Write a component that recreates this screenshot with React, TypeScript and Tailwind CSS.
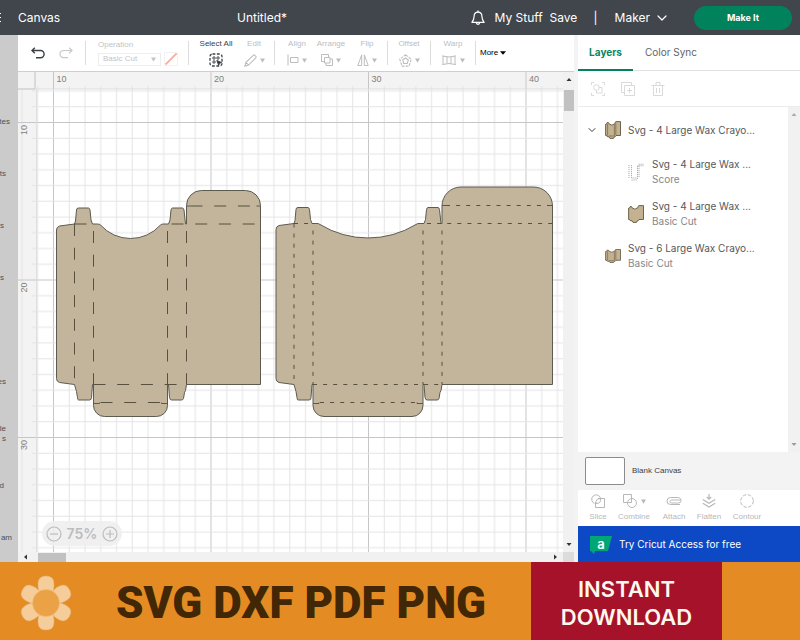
import { useState, type ReactNode } from 'react';
import { ChevronDown } from 'lucide-react';

const GRID_STEP = 15.75;

const sidebarItems = [
  { lines: ['tes'], width: 'w-2.5' },
  { lines: ['ts'], width: 'w-1.5' },
  { lines: ['s'], width: 'w-1' },
  { lines: ['s'], width: 'w-1' },
  { lines: [], width: 'w-1' },
  { lines: ['es'], width: 'w-1.5' },
  { lines: ['le', 's'], width: 'w-1.5' },
  { lines: ['d'], width: 'w-1' },
  { lines: ['am'], width: 'w-3' },
];

function Divider() {
  return <div className="h-6 w-px shrink-0 bg-[#dcdcdc]" />;
}

function Caret() {
  return (
    <svg className="h-[5px] w-[5px] shrink-0" viewBox="0 0 5 5" fill="currentColor">
      <path d="M0 .5h5L2.500 4.800z" />
    </svg>
  );
}

type ToolProps = {
  label: string;
  width: string;
  caret?: boolean;
  active?: boolean;
  children: ReactNode;
};

function Tool({ label, width, caret = true, active = false, children }: ToolProps) {
  return (
    <button
      type="button"
      className={`flex shrink-0 flex-col items-center gap-1 whitespace-nowrap text-[8px] leading-[10px] ${width} ${
        active ? 'text-[#3c3f45]' : 'text-[#bdbdbd]'
      }`}
    >
      <span>{label}</span>
      <span className="flex h-3.5 items-center gap-[3px]">
        {children}
        {caret && <Caret />}
      </span>
    </button>
  );
}

function Header() {
  return (
    <header className="flex h-[35px] items-center bg-[#41454c] font-[Inter,sans-serif] text-[12px] text-white">
      <div className="flex w-[18px] shrink-0 flex-col gap-[3px]">
        <div className="h-px w-px bg-white" />
        <div className="h-px w-px bg-white" />
        <div className="h-px w-px bg-white" />
      </div>
      <span className="w-[219px]">Canvas</span>
      <span>Untitled*</span>
      <div className="ml-auto flex items-center">
        <button type="button" aria-label="Notifications" className="mr-2.5">
          <svg className="h-4 w-3.5" viewBox="0 0 14 16" fill="none" stroke="currentColor" strokeWidth="1.2">
            <path d="M7 2.2C4.6 2.2 3.1 4 3.1 6.3c0 3-.7 4.2-2.2 6.1h12.2c-1.5-1.9-2.2-3.1-2.2-6.1C10.9 4 9.4 2.2 7 2.2z" strokeLinejoin="round" />
            <path d="M7 2.2V.8M5.3 12.6a1.7 1.7 0 0 0 3.4 0" strokeLinecap="round" />
          </svg>
        </button>
        <a href="#stuff" className="w-[55px]">My Stuff</a>
        <button type="button" className="w-11 text-left">Save</button>
        <span className="w-[21px]">|</span>
        <button type="button" className="mr-6 flex items-center gap-1">
          Maker
          <ChevronDown className="h-4 w-4" strokeWidth={1.8} />
        </button>
        <button type="button" className="mr-2 h-6 w-[98px] rounded-full bg-[#00835d] text-[9px] font-bold">
          Make It
        </button>
      </div>
    </header>
  );
}

function Toolbar() {
  return (
    <div className="flex h-[37px] shrink-0 items-center overflow-hidden border-b border-[#cfcfcf] bg-white">
      <button type="button" aria-label="Undo" className="ml-1.5 flex w-7 justify-center text-[#3c3f45]">
        <svg className="h-3.5 w-3.5" viewBox="0 0 14 14" fill="none" stroke="currentColor" strokeWidth="1.4">
          <path d="M3.8 1.8L1 4.5l2.800 2.700M1 4.500h8.500a3.600 3.600 0 0 1 0 7.200H5" />
        </svg>
      </button>
      <button type="button" aria-label="Redo" className="flex w-7 justify-center text-[#c8c8c8]">
        <svg className="h-3.5 w-3.5" viewBox="0 0 14 14" fill="none" stroke="currentColor" strokeWidth="1.2">
          <path d="M10.200 1.800L13 4.500l-2.800 2.700M13 4.500H4.500a3.600 3.600 0 0 0 0 7.200H9" />
        </svg>
      </button>
      <div className="w-[5px]" />
      <Divider />
      <div className="ml-3 mr-2.5 flex w-20 flex-col gap-0.5 text-[8px] leading-[10px] text-[#c4c4c4]">
        <label htmlFor="operation">Operation</label>
        <div className="flex items-center justify-between">
          <div className="flex h-[13px] w-[63px] items-center border border-[#eeeeee] pr-1">
            <select id="operation" className="h-full w-full appearance-none bg-transparent pl-1 leading-[10px] outline-none">
              <option>Basic Cut</option>
            </select>
            <Caret />
          </div>
          <button type="button" aria-label="Material colour" className="border border-[#f2f2f2]">
            <svg className="h-3 w-3" viewBox="0 0 12 12" stroke="#f5ad9d" strokeWidth="1.800">
              <path d="M.5 11.500L11.500 .5" />
            </svg>
          </button>
        </div>
      </div>
      <Divider />
      <div className="w-[9px]" />
      <Tool label="Select All" width="w-9" caret={false} active>
        <svg className="h-3.5 w-3.5" viewBox="0 0 14 14" fill="none" stroke="currentColor">
          <rect x="1" y="1" width="12" height="12" rx="2.500" strokeWidth="1.300" strokeDasharray="2.800 1.600" />
          <circle cx="5" cy="5" r="1.200" />
          <circle cx="9" cy="5" r="1.200" />
          <circle cx="5" cy="9" r="1.200" />
          <path d="M7.800 7.500l4.700 2-2 .8-.8 2z" fill="currentColor" />
        </svg>
      </Tool>
      <Tool label="Edit" width="w-10">
        <svg className="h-[13px] w-[13px]" viewBox="0 0 12 12" fill="none" stroke="currentColor">
          <path d="M.8 11.200l1-3.500L8.500 1.200q.8-.8 1.500 0l.8.8q.8.7 0 1.500L4.300 10.200zM1.800 7.700l2.500 2.500" />
        </svg>
      </Tool>
      <Divider />
      <div className="w-1" />
      <Tool label="Align" width="w-9">
        <svg className="h-3 w-3" viewBox="0 0 12 12" fill="none" stroke="currentColor">
          <path d="M1 .5v11M3.500 3.500h7.500v5H3.500z" />
        </svg>
      </Tool>
      <Tool label="Arrange" width="w-8">
        <svg className="h-3 w-3" viewBox="0 0 12 12" fill="none" stroke="currentColor">
          <path d="M3.500 7.500h-3v-7h7v3M5 9v2.500h6.500V5H9M3.500 3.500h5.500v5.500H3.500z" />
        </svg>
      </Tool>
      <Tool label="Flip" width="w-10">
        <svg className="h-3 w-3" viewBox="0 0 12 12" fill="none" stroke="currentColor">
          <path d="M4.700 .8v10.700H.8zM7.300 .8v10.700h3.900z" />
        </svg>
      </Tool>
      <Divider />
      <Tool label="Offset" width="w-[42px]">
        <svg className="h-[13px] w-[13px]" viewBox="0 0 12 12" fill="none" stroke="currentColor">
          <path d="M6 .8l5.300 4-2 6.400H2.700l-2-6.400z" strokeDasharray="2.500 1" />
          <path d="M6 3.700l2.600 1.900-1 3.100H4.400l-1-3.100z" />
        </svg>
      </Tool>
      <Divider />
      <Tool label="Warp" width="w-11">
        <svg className="h-3 w-4" viewBox="0 0 16 12" fill="none" stroke="currentColor">
          <path d="M1.500 2q6.500 2 13 0M1.500 10.500q6.500-2 13 0M2 1.500v9.500M14 1.500v9.500M6 3v6.500M10 3v6.500" />
        </svg>
      </Tool>
      <Divider />
      <button type="button" className="ml-1 flex items-center gap-0.5 text-[8px] text-black">
        More
        <svg className="h-1 w-1.5" viewBox="0 0 6 4" fill="currentColor">
          <path d="M0 .3h6L3 3.800z" />
        </svg>
      </button>
    </div>
  );
}

// A carton template: fold lines at x1..x4, outer edges at x0 and x5
type BoxProps = {
  x: [number, number, number, number, number, number];
  top: number;
  lid: number;
  radius: number;
  dash: string;
};

function BoxTemplate({ x, top, lid, radius: r, dash }: BoxProps) {
  const [x0, x1, x2, x3, x4, x5] = x;
  const bottom = 312.5;
  // Thumb notch is a circular arc of a fixed depth
  const chord = x3 - x2 - 14;
  const depth = 13.5;
  const notch = (chord * chord) / (8 * depth) + depth / 2;
  const outline = [
    `M${x0} ${top + 6}Q${x0} ${top + 3} ${x0 + 3} ${top + 2}L${x1} ${top}`,
    `L${x1 + 1} ${top - 3}L${x1 + 2} ${top - 14}Q${x1 + 2} ${top - 16} ${x1 + 4} ${top - 16}`,
    `H${x1 + 14}Q${x1 + 15} ${top - 16} ${x1 + 15.5} ${top - 14}L${x1 + 16.5} ${top - 4}L${x2 - 1} ${top}`,
    `H${x2 + 4}Q${x2 + 6} ${top} ${x2 + 7} ${top + 1}A${notch} ${notch} 0 0 0 ${x3 - 7} ${top + 1}Q${x3 - 6} ${top} ${x3 - 4} ${top}`,
    `H${x3 + 1}L${x3 + 2.5} ${top - 4}L${x3 + 3.5} ${top - 14}Q${x3 + 4} ${top - 16} ${x3 + 5} ${top - 16}`,
    `H${x4 - 4}Q${x4 - 3} ${top - 16} ${x4 - 2.5} ${top - 14}L${x4 - 1} ${top}H${x4}`,
    `V${lid + r}A${r} ${r} 0 0 1 ${x4 + r} ${lid}H${x5 - r}A${r} ${r} 0 0 1 ${x5} ${lid + r}V${bottom}H${x4}`,
    `L${x4 - 1} ${bottom + 6}L${x4 - 2} ${bottom + 8}L${x4 - 3} ${bottom + 14}Q${x4 - 3.5} ${bottom + 15.5} ${x4 - 5} ${bottom + 15.5}`,
    `H${x3 + 4}Q${x3 + 2.5} ${bottom + 15.5} ${x3 + 2} ${bottom + 13}L${x3 + 1} ${bottom}H${x3}`,
    `V${bottom + 21}A11 11 0 0 1 ${x3 - 11} ${bottom + 32}H${x2 + 11}A11 11 0 0 1 ${x2} ${bottom + 21}V${bottom}H${x2 - 1}`,
    `L${x2 - 2} ${bottom + 13}Q${x2 - 2} ${bottom + 15.5} ${x2 - 4} ${bottom + 15.5}H${x1 + 4}`,
    `Q${x1 + 3} ${bottom + 15.5} ${x1 + 3} ${bottom + 13}L${x1 + 2} ${bottom + 7}L${x1} ${bottom}L${x0 + 3} ${bottom - 2}Q${x0} ${bottom - 3} ${x0} ${bottom - 6}Z`,
  ].join('');

  return (
    <g fill="none" stroke="#5d5a50">
      <path d={outline} fill="#c3b59b" />
      <g strokeDasharray={dash} stroke="#57503f">
        <path d={`M${x1} ${top}V${bottom}`} />
        {[x2, x3, x4].map((fold) => (
          <path key={fold} d={`M${fold} ${top + 7}V${bottom}`} />
        ))}
        <path d={`M${x1} ${top}H${x2}M${x3 + 4} ${top}H${x5}`} />
        <path d={`M${x4 + 4} ${top - 18}H${x5}`} />
        <path d={`M${x2} ${bottom}H${x4}`} />
        <path d={`M${x2 + 7} ${bottom + 18}H${x3 - 7}`} />
      </g>
      <path d={`M${x4} ${top - 18}h4M${x5} ${top - 18}h-4M${x2} ${bottom + 19}h6v-1M${x3} ${bottom + 19}h-6v-1`} />
    </g>
  );
}

function Workspace() {
  const minor = Array.from({ length: 10 }, (_, i) => i);
  const size = GRID_STEP * 10;
  return (
    <svg className="absolute inset-0 h-full w-full" fontSize="9" fill="#808080">
      <defs>
        <pattern id="columns" x="35" y="0" width={size} height="4000" patternUnits="userSpaceOnUse">
          {minor.map((i) => (
            <rect key={i} x={i * GRID_STEP} y={i === 0 ? 0 : 14} width="1" height="4000" fill={i === 0 ? '#c6c6c6' : '#e4e4e4'} />
          ))}
        </pattern>
        <pattern id="rows" x="0" y="50" width="4000" height={size} patternUnits="userSpaceOnUse">
          {minor.map((i) => (
            <rect key={i} x={i === 0 ? 0 : 14} y={i * GRID_STEP} width="4000" height="1" fill={i === 0 ? '#c6c6c6' : '#e4e4e4'} />
          ))}
        </pattern>
      </defs>
      <rect width="100%" height="100%" fill="#ffffff" />
      <rect width="100%" height="17" fill="#f3f3f3" />
      <rect width="18" height="100%" fill="#f3f3f3" />
      <rect width="100%" height="100%" fill="url(#columns)" />
      <rect y="18" width="100%" height="100%" fill="url(#rows)" />
      {[10, 20, 30, 40].map((mark, i) => (
        <text key={mark} x={38.5 + i * size} y="10">{mark}</text>
      ))}
      {[10, 20, 30].map((mark, i) => (
        <text key={mark} transform={`translate(9 ${63 + i * size}) rotate(-90)`}>{mark}</text>
      ))}
      <path d="M0 17H17V0" fill="#f3f3f3" stroke="#c0c0c0" />
      <path d="M18.500 17V4000" stroke="#e0e0e0" />
      <line x1="18" x2="100%" y1="17" y2="17" stroke="#dddddd" />
      <BoxTemplate x={[38.5, 56.5, 75.5, 149.5, 168.5, 242.5]} top={152} lid={118.5} radius={15} dash="12 11.7" />
      <BoxTemplate x={[258, 276, 295, 405, 424, 534.5]} top={151.5} lid={115} radius={19} dash="4 6.1" />
    </svg>
  );
}

function CanvasArea() {
  const [zoom, setZoom] = useState(75);
  return (
    <main className="flex min-w-0 flex-1 flex-col">
      <Toolbar />
      <div className="flex flex-1">
        <div className="relative flex-1 overflow-hidden">
          <Workspace />
          <div className="absolute bottom-1.5 left-6 flex h-[25px] w-20 items-center justify-between rounded-full bg-[#eeeeee]/90 px-1 text-[#bcbcbf]">
            <button type="button" aria-label="Zoom out" onClick={() => setZoom(zoom - 25)}>
              <svg className="h-4 w-4" viewBox="0 0 16 16" fill="none" stroke="currentColor" strokeWidth="1.2">
                <circle cx="8" cy="8" r="7" />
                <path d="M4 8h8" />
              </svg>
            </button>
            <span className="font-[Inter,sans-serif] text-[14px] font-semibold">{zoom}%</span>
            <button type="button" aria-label="Zoom in" onClick={() => setZoom(zoom + 25)}>
              <svg className="h-4 w-4" viewBox="0 0 16 16" fill="none" stroke="currentColor" strokeWidth="1.2">
                <circle cx="8" cy="8" r="7" />
                <path d="M4 8h8M8 4v8" />
              </svg>
            </button>
          </div>
        </div>
        {/* Vertical scrollbar */}
        <div className="flex w-[11px] flex-col items-center justify-between bg-[#f1f1f1] py-1">
          <div className="flex w-full flex-col items-center gap-2">
            <svg className="h-1.5 w-1.5" viewBox="0 0 6 6"><path d="M.5 5L3 2l2.500 3z" fill="#333" /></svg>
            <div className="h-[21px] w-[10px] bg-[#c1c1c1]" />
          </div>
          <svg className="h-1.5 w-1.5" viewBox="0 0 6 6"><path d="M.5 1L3 4l2.500-3z" fill="#333" /></svg>
        </div>
      </div>
      {/* Horizontal scrollbar */}
      <div className="flex h-2.5 bg-[#f1f1f1]">
        <div className="flex flex-1 items-center justify-between px-1">
          <div className="flex items-center gap-2.5">
            <svg className="h-1.5 w-1.5" viewBox="0 0 6 6"><path d="M5 .5L2 3l3 2.500z" fill="#333" /></svg>
            <div className="h-[9px] w-7 bg-[#c1c1c1]" />
          </div>
          <svg className="h-1.5 w-1.5" viewBox="0 0 6 6"><path d="M1 .5L4 3 1 5.500z" fill="#333" /></svg>
        </div>
        <div className="w-[11px] bg-[#dcdcdc]" />
      </div>
    </main>
  );
}

function Thumbnail({ kind }: { kind: 'tall' | 'cut' | 'score' | 'wide' }) {
  if (kind === 'score') {
    return (
      <svg className="h-[18px] w-4 shrink-0" viewBox="0 0 16 18" fill="none" stroke="#9a9a9a" strokeWidth="0.8" strokeDasharray="1.2 0.8">
        <path d="M1 2v13M3.500 2v13h5.500M3.500 17h5.500M9.500 16V2M11 14V2M10.500 1.200h5M10.500 2.700h5" />
      </svg>
    );
  }
  const height = kind === 'wide' ? 'h-3.5' : 'h-[18px]';
  return (
    <svg className={`w-4 shrink-0 ${height}`} viewBox="0 0 16 18" preserveAspectRatio="none" stroke="#4f4630" strokeWidth="0.8">
      <path d="M.6 3.200L1.800 2.800 2.200 1.500h1.200L4 2.800Q7 5.500 9.500 2.800L10 2.500V1.500L11 .6h4.500V14.500H11l-.8 1.200H9.500l-1 1.700H5L4 15.800H2.500L2 14.800.6 14.400z" fill="#c3b190" />
      {kind !== 'cut' && (
        <path d="M2.600 3v11.500M9.400 3.500V15M10.800 2.500v11.500M4 15h5" fill="none" strokeWidth="0.7" strokeOpacity="0.75" />
      )}
    </svg>
  );
}

function LayerText({ name, operation }: { name: string; operation?: string }) {
  return (
    <div className="whitespace-nowrap font-[Inter,sans-serif] text-[10px] leading-[15px] text-[#55585d]">
      <p>{name}</p>
      {operation && <p className="text-[#85878b]">{operation}</p>}
    </div>
  );
}

function PanelAction({ label, width, children }: { label: string; width: string; children: ReactNode }) {
  return (
    <button type="button" className={`flex flex-col items-center gap-1 text-[8px] leading-[10px] text-[#b8b8b8] ${width}`}>
      <span className="flex items-center gap-1">{children}</span>
      {label}
    </button>
  );
}

function LayersPanel() {
  return (
    <aside className="flex w-[222px] shrink-0 flex-col bg-white">
      <div className="flex h-9 border-b border-[#e2e2e2] font-[Inter,sans-serif] text-[10px] text-[#626469]">
        <button type="button" className="h-9 w-[55px] border-b-2 border-[#00835d] font-bold text-[#0a8560]">
          Layers
        </button>
        <button type="button" className="ml-3 h-[35px]">Color Sync</button>
      </div>
      <div className="flex h-9 items-center gap-4 border-b border-[#ececec] px-[13px] text-[#dadada]">
        <button type="button" aria-label="Group">
          <svg className="h-3.5 w-3.5" viewBox="0 0 14 14" fill="none" stroke="currentColor">
            <path d="M.5 3V.5H3M11 .5h2.500V3M13.500 11v2.500H11M3 13.500H.5V11M7.500 5.500h3.500V11H5.500V8.500" />
            <circle cx="5.5" cy="5.5" r="2.8" />
          </svg>
        </button>
        <button type="button" aria-label="Duplicate">
          <svg className="h-3.5 w-3.5" viewBox="0 0 14 14" fill="none" stroke="currentColor">
            <path d="M3 10.500H.5V.5h10V3M3.500 3.500h10v10h-10zM8.500 6v5M6 8.500h5" />
          </svg>
        </button>
        <button type="button" aria-label="Delete">
          <svg className="h-3.5 w-3.5" viewBox="0 0 14 14" fill="none" stroke="currentColor">
            <path d="M.5 3.500h13M2.500 3.500v10h9v-10M5 3.500v-3h4v3M5.500 6v5M8.500 6v5" />
          </svg>
        </button>
      </div>

      {/* Layer list */}
      <div className="flex flex-1">
        <ul className="flex flex-1 flex-col pt-[9px]">
          <li className="flex h-7 items-center pl-2">
            <button type="button" aria-label="Collapse group" className="mr-[7px] text-[#3c3f45]">
              <ChevronDown className="h-3 w-3" />
            </button>
            <div className="mr-[7px]"><Thumbnail kind="tall" /></div>
            <LayerText name="Svg - 4 Large Wax Crayo..." />
          </li>
          <li className="flex h-14 items-center gap-2 pl-[50px]">
            <Thumbnail kind="score" />
            <LayerText name="Svg - 4 Large Wax ..." operation="Score" />
          </li>
          <li className="flex h-7 items-center gap-2 pl-[50px]">
            <Thumbnail kind="cut" />
            <LayerText name="Svg - 4 Large Wax ..." operation="Basic Cut" />
          </li>
          <li className="flex h-14 items-center gap-[7px] pl-[27px]">
            <Thumbnail kind="wide" />
            <LayerText name="Svg - 6 Large Wax Crayo..." operation="Basic Cut" />
          </li>
        </ul>
        <div className="flex w-3 flex-col items-center justify-between bg-[#f1f1f1] py-1">
          <svg className="h-1.5 w-1.5" viewBox="0 0 6 6"><path d="M.5 5L3 2l2.500 3z" fill="#aaa" /></svg>
          <svg className="h-1.5 w-1.5" viewBox="0 0 6 6"><path d="M.5 1L3 4l2.500-3z" fill="#999" /></svg>
        </div>
      </div>

      <div className="flex h-[38px] items-center gap-[7px] bg-[#f3f3f3] px-[7px] text-[8px] text-[#3c3f45]">
        <div className="h-7 w-10 rounded-[2px] border border-[#8c8c8c] bg-white" />
        Blank Canvas
      </div>

      <div className="flex h-9 items-center text-[#b0b0b0]">
        <PanelAction label="Slice" width="w-10">
          <svg className="h-3.5 w-3.5" viewBox="0 0 14 14" fill="none" stroke="currentColor">
            <path d="M3.500 9.500a4.500 4.500 0 1 1 6-5.500M7 4.500h6.500v9h-9V8M5 9.500V7.500q.5-3 4.500-3 1 5-4.500 5z" />
          </svg>
        </PanelAction>
        <PanelAction label="Combine" width="w-8">
          <svg className="h-3.5 w-3.5 shrink-0" viewBox="0 0 14 14" fill="none" stroke="currentColor">
            <path d="M.5.5h8v8h-8z" />
            <circle cx="9" cy="9" r="4.5" />
          </svg>
          <Caret />
        </PanelAction>
        <PanelAction label="Attach" width="w-12">
          <svg className="h-3.5 w-4" viewBox="0 0 16 14" fill="none" stroke="currentColor">
            <path d="M14.500 6H5.500a1.500 1.500 0 0 0 0 3h7q2.500 0 2.500-2.500T12.500 3.500H4.500Q1 3.500 1 7t3.500 3.500H14" />
          </svg>
        </PanelAction>
        <PanelAction label="Flatten" width="w-[22px]">
          <svg className="h-3.5 w-3.5" viewBox="0 0 14 14" fill="none" stroke="currentColor" strokeWidth="1.2">
            <path d="M7 0v5M4.800 3L7 5.200 9.200 3M.8 5.500L7 9.200l6.200-3.700M.8 9.200L7 13l6.200-3.800" />
          </svg>
        </PanelAction>
        <PanelAction label="Contour" width="w-[54px]">
          <svg className="h-3.5 w-3.5" viewBox="0 0 14 14" fill="none" stroke="currentColor">
            <circle cx="7" cy="7" r="6.3" strokeDasharray="3.4 1.55" />
          </svg>
        </PanelAction>
      </div>

      <a href="#access" className="flex h-9 items-center gap-[7px] bg-[#0d49c4] px-3 font-[Inter,sans-serif] text-[10px] text-white">
        <div className="relative flex h-4 w-[22px] items-center justify-center">
          <svg className="absolute top-0 left-0 h-[18px] w-[22px]" viewBox="0 0 22 18">
            <path d="M0 0h22l-4 15H5l-1 3-3-3H0z" fill="#00a675" />
          </svg>
          <span className="relative text-[13px] font-semibold leading-4">a</span>
        </div>
        Try Cricut Access for free
      </a>
    </aside>
  );
}

function Flower() {
  return (
    <svg className="h-14 w-[52px] shrink-0" viewBox="-26 -28 52 56">
      {[0, 60, 120, 180, 240, 300].map((angle) => (
        <path
          key={angle}
          d="M-7-11C-8-15-8.500-19-7.500-22.500Q-6-27 0-27T7.500-22.500C8.500-19 8-15 7-11Z"
          fill="#f5cd9b"
          stroke="#e3ae6e"
          strokeWidth="0.5"
          transform={`rotate(${angle})`}
        />
      ))}
      <circle r="13.5" fill="#eba246" stroke="#f0be80" strokeWidth="0.5" />
    </svg>
  );
}

export default function App() {
  return (
    <div className="flex min-h-screen flex-col bg-white font-['Liberation_Sans',Arial,sans-serif]">
      <Header />
      <div className="flex flex-1">
        {/* Collapsed sidebar */}
        <nav className="flex w-[18px] shrink-0 flex-col gap-8 overflow-hidden bg-[#cbcbcb] pt-[77px] text-[8px] leading-[10px] text-[#4c4f55]">
          {sidebarItems.map((item, i) => (
            <div key={i} className={`flex h-5 flex-col items-end justify-center ${item.width}`}>
              {item.lines.map((line) => (
                <span key={line}>{line}</span>
              ))}
            </div>
          ))}
        </nav>
        <CanvasArea />
        <div className="w-1 shrink-0 bg-[#f3f3f3]" />
        <LayersPanel />
      </div>

      {/* Promo banner */}
      <footer className="flex h-[78px] shrink-0 bg-[#e48c23]">
        <div className="flex flex-1 items-center pt-1 pl-5">
          <Flower />
          <p className="ml-11 whitespace-nowrap font-[Roboto,sans-serif] text-[44px] font-black leading-none text-[#422706]">
            SVG DXF PDF PNG
          </p>
        </div>
        <div className="flex w-[191px] items-center justify-center bg-[#a5122a] pt-1 text-center font-[Inter,sans-serif] text-[22px] font-semibold leading-7 text-[#fff8ee]">
          INSTANT
          <br />
          DOWNLOAD
        </div>
        <div className="w-[78px]" />
      </footer>
    </div>
  );
}
